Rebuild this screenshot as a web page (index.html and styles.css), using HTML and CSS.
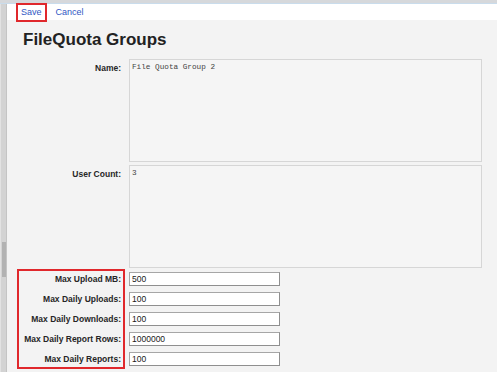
FILE: index.html
```html
<!DOCTYPE html>
<html lang="en">
<head>
    <meta charset="UTF-8">
    <meta name="viewport" content="width=device-width, initial-scale=1.0">
    <title>FileQuota Groups</title>
    <link rel="stylesheet" href="styles.css">
</head>
<body>
    <div class="topline"></div>
    <div class="frame">
        <div class="side-scroll">
            <div class="side-thumb"></div>
        </div>

        <div class="main">
            <div class="toolbar">
                <a href="#" class="tool-link save-link">Save</a>
                <a href="#" class="tool-link">Cancel</a>
            </div>

            <div class="content">
                <h1>FileQuota Groups</h1>

                <div class="field-row">
                    <label for="name">Name:</label>
                    <textarea id="name" name="name" readonly>File Quota Group 2</textarea>
                </div>

                <div class="field-row">
                    <label for="userCount">User Count:</label>
                    <textarea id="userCount" name="userCount" readonly>3</textarea>
                </div>

                <div class="limits">
                    <div class="limit-labels">
                        <label for="maxUpload">Max Upload MB:</label>
                        <label for="maxUploads">Max Daily Uploads:</label>
                        <label for="maxDownloads">Max Daily Downloads:</label>
                        <label for="maxRows">Max Daily Report Rows:</label>
                        <label for="maxReports">Max Daily Reports:</label>
                    </div>
                    <div class="limit-fields">
                        <input type="text" id="maxUpload" name="maxUpload" value="500">
                        <input type="text" id="maxUploads" name="maxUploads" value="100">
                        <input type="text" id="maxDownloads" name="maxDownloads" value="100">
                        <input type="text" id="maxRows" name="maxRows" value="1000000">
                        <input type="text" id="maxReports" name="maxReports" value="100">
                    </div>
                </div>
            </div>
        </div>
    </div>
</body>
</html>
```

FILE: styles.css
```css
body {
    margin: 0;
    font-family: "Liberation Sans", Arial, sans-serif;
    background-color: #f3f3f3;
    color: #333333;
    height: 372px;
    overflow: hidden;
}

.topline {
    height: 3px;
    background-color: #d6d8db;
    border-bottom: 1px solid #c9dcec;
}

.frame {
    display: flex;
    height: 368px;
}

.side-scroll {
    width: 5px;
    background-color: #d3d3d3;
    border-left: 1px solid #e2e2e2;
    border-right: 1px solid #c4c4c4;
}

.side-thumb {
    margin-top: 238px;
    margin-left: 1px;
    width: 4px;
    height: 35px;
    background-color: #b2b2b2;
}

.main {
    flex: 1;
    display: flex;
    flex-direction: column;
}

.toolbar {
    height: 16px;
    background: #ffffff;
    display: flex;
    align-items: center;
    gap: 13px;
    padding-left: 13px;
}

.tool-link {
    font-size: 9px;
    color: #3157c4;
    text-decoration: none;
    line-height: 11px;
}

.save-link {
    outline: 2px solid #e0282c;
    outline-offset: 2px;
    padding: 0 1px;
}

.content {
    padding: 10px 0 0 0;
}

h1 {
    margin: 0 0 9px 16px;
    font-size: 17px;
    line-height: 20px;
    font-weight: bold;
    color: #222222;
}

.field-row {
    display: flex;
    gap: 6px;
    margin-bottom: 3px;
    margin-left: 12px;
}

label {
    font-size: 8.5px;
    font-weight: bold;
    color: #262626;
    line-height: 10px;
}

.field-row label {
    width: 104px;
    text-align: right;
    padding-right: 2px;
    padding-top: 4px;
    box-sizing: border-box;
}

textarea {
    width: 353px;
    height: 103px;
    box-sizing: border-box;
    margin: 0;
    padding: 3px 2px;
    border: 1px solid #d6d6d6;
    background-color: #f5f5f5;
    font-family: "Liberation Mono", "Courier New", monospace;
    font-size: 7.7px;
    color: #444444;
    resize: none;
}

.limits {
    display: flex;
    gap: 6px;
    margin-left: 12px;
}

.limit-labels,
.limit-fields {
    display: flex;
    flex-direction: column;
    gap: 6px;
    padding: 1px 0;
}

.limit-labels {
    width: 104px;
    outline: 2px solid #e0282c;
    align-items: flex-end;
}

.limit-labels label {
    height: 14px;
    line-height: 14px;
    padding-right: 2px;
}

.limit-fields input {
    width: 151px;
    height: 14px;
    box-sizing: border-box;
    margin: 0;
    padding: 0 2px;
    border: 1px solid #a6a6a6;
    border-right-color: #8f8f8f;
    border-bottom-color: #8f8f8f;
    background: #ffffff;
    font-family: "Liberation Sans", Arial, sans-serif;
    font-size: 8.5px;
    color: #1a1a1a;
}
```
